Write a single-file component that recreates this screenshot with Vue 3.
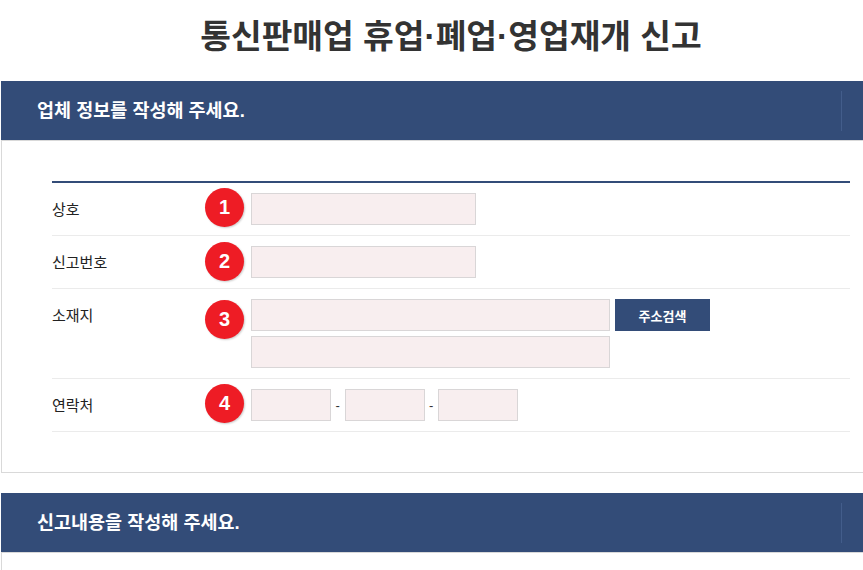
<script setup>
const phone = ['', '', '']
</script>

<template>
  <main class="page">
    <h1>통신판매업 휴업·폐업·영업재개 신고</h1>

    <section class="panel">
      <h2 class="bar"><span>업체 정보를 작성해 주세요.</span></h2>
      <div class="body">
        <div class="form">
          <div class="row">
            <label>상호</label>
            <b class="num">1</b>
            <input type="text" class="mid" />
          </div>
          <div class="row">
            <label>신고번호</label>
            <b class="num num-two">2</b>
            <input type="text" class="mid" />
          </div>
          <div class="row">
            <label>소재지</label>
            <b class="num num-top">3</b>
            <div class="addr">
              <div class="addr-line">
                <input type="text" class="long" />
                <button type="button">주소검색</button>
              </div>
              <input type="text" class="long" />
            </div>
          </div>
          <div class="row">
            <label>연락처</label>
            <b class="num">4</b>
            <div class="phone">
              <template v-for="(p, i) in phone" :key="i">
                <span v-if="i > 0" class="dash">-</span>
                <input type="text" class="short" :value="p" />
              </template>
            </div>
          </div>
        </div>
      </div>
    </section>

    <section class="panel">
      <h2 class="bar"><span>신고내용을 작성해 주세요.</span></h2>
      <div class="body"></div>
    </section>
  </main>
</template>

<style>
html, body {
  overflow: hidden;
  background: #fff;
}
</style>

<style scoped>
* {
  box-sizing: border-box;
  margin: 0;
  padding: 0;
}
.page {
  width: 890px;
  padding-left: 1px;
  font-family: "Liberation Sans", "Noto Sans CJK KR", sans-serif;
  color: #333;
}
h1 {
  width: 900px;
  height: 81px;
  padding-top: 11px;
  font-size: 33.4px;
  line-height: 52px;
  font-weight: 700;
  text-align: center;
  color: #333;
}
.panel {
  margin-bottom: 20px;
}
.bar {
  position: relative;
  height: 60px;
  padding-left: 36px;
  background: #334c78;
  border-bottom: 1px solid #d9d9d9;
  color: #fff;
  font-size: 18.5px;
  font-weight: 700;
  line-height: 59px;
}
.bar::after {
  content: "";
  position: absolute;
  left: 840px;
  top: 10px;
  width: 1px;
  height: 40px;
  background: #435d8b;
}
.body {
  border-left: 1px solid #d9d9d9;
  border-bottom: 1px solid #d9d9d9;
  padding: 40px 0 40px 50px;
}
.form {
  width: 798px;
  border-top: 2px solid #334c78;
}
.row {
  display: flex;
  align-items: flex-start;
  padding: 10px 0;
  border-bottom: 1px solid #ebebeb;
}
.row label {
  width: 153px;
  height: 32px;
  font-size: 15px;
  line-height: 34px;
  color: #222;
}
.num {
  flex: none;
  width: 39px;
  height: 39px;
  margin: -5px 7px -10px 0;
  border-radius: 50%;
  background: #ee1c25;
  box-shadow: 1px 1px 2px rgba(0, 0, 0, 0.2);
  color: #fff;
  font-size: 20px;
  font-weight: 700;
  line-height: 38px;
  text-align: center;
}
.num-two {
  margin-top: -4px;
}
.num-top {
  margin-top: 1px;
}
input {
  display: block;
  height: 32px;
  background: #f8eeef;
  border: 1px solid #d9d6d7;
  outline: none;
}
.mid {
  width: 225px;
}
.long {
  width: 359px;
}
.short {
  width: 80px;
}
.addr {
  display: flex;
  flex-direction: column;
  gap: 5px;
}
.addr-line {
  display: flex;
  gap: 5px;
}
button {
  width: 95px;
  height: 32px;
  border: none;
  background: #334c78;
  color: #fff;
  font-family: inherit;
  font-size: 13px;
  font-weight: 700;
}
.phone {
  display: flex;
  align-items: center;
}
.dash {
  width: 13.5px;
  font-size: 13px;
  text-align: center;
  color: #333;
}
</style>
